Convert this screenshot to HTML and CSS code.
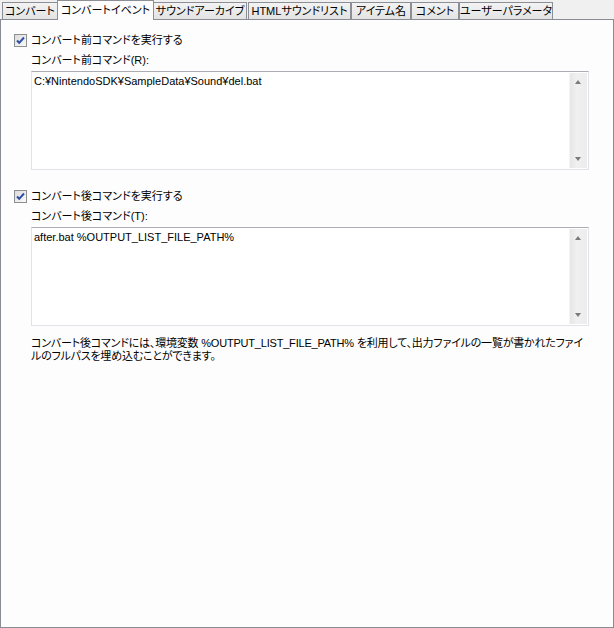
FILE: index.html
```html
<!DOCTYPE html>
<html lang="ja">
<head>
<meta charset="utf-8">
<link rel="stylesheet" href="styles.css">
</head>
<body>
<div class="tabs">
  <div class="tab t1">コンバート</div>
  <div class="tab t2 active">コンバートイベント</div>
  <div class="tab t3">サウンドアーカイブ</div>
  <div class="tab t4">HTMLサウンドリスト</div>
  <div class="tab t5">アイテム名</div>
  <div class="tab t6">コメント</div>
  <div class="tab t7">ユーザーパラメータ</div>
</div>
<div class="panel">
  <div class="check-row first">
    <span class="cb"><svg width="13" height="13" viewBox="0 0 13 13"><path d="M3 6.5 L5.2 8.8 L10 3.5" fill="none" stroke="#2c4fa8" stroke-width="2"/></svg></span>
    <span class="cb-label">コンバート前コマンドを実行する</span>
  </div>
  <div class="field-label">コンバート前コマンド(R):</div>
  <div class="textbox">
    <div class="text">C:¥NintendoSDK¥SampleData¥Sound¥del.bat</div>
    <div class="vscroll"><span class="up"></span><span class="down"></span></div>
  </div>
  <div class="check-row second">
    <span class="cb"><svg width="13" height="13" viewBox="0 0 13 13"><path d="M3 6.5 L5.2 8.8 L10 3.5" fill="none" stroke="#2c4fa8" stroke-width="2"/></svg></span>
    <span class="cb-label">コンバート後コマンドを実行する</span>
  </div>
  <div class="field-label">コンバート後コマンド(T):</div>
  <div class="textbox">
    <div class="text">after.bat %OUTPUT_LIST_FILE_PATH%</div>
    <div class="vscroll"><span class="up"></span><span class="down"></span></div>
  </div>
  <p class="note">コンバート後コマンドには、環境変数 %OUTPUT_LIST_FILE_PATH% を利用して、出力ファイルの一覧が書かれたファイ<br>ルのフルパスを埋め込むことができます。</p>
</div>
</body>
</html>
```
FILE: styles.css
```css
html, body {
  margin: 0;
  padding: 0;
}
body {
  width: 614px;
  height: 628px;
  background: #f0f0f0;
  font-family: "Liberation Sans", "Noto Sans CJK JP", sans-serif;
  font-size: 11px;
  font-feature-settings: "palt";
  color: #000;
  overflow: hidden;
}
.tabs {
  display: flex;
  align-items: flex-end;
  height: 19px;
  padding-left: 2px;
  position: relative;
  z-index: 2;
}
.tab {
  box-sizing: border-box;
  height: 17px;
  border: 1px solid #8c8f96;
  border-bottom: none;
  background: linear-gradient(#f3f3f3, #e3e3e3);
  display: flex;
  align-items: center;
  justify-content: center;
  line-height: 12px;
  white-space: nowrap;
}
.tab.active {
  height: 20px;
  background: #fdfdfd;
  margin-bottom: -1px;
  padding-bottom: 2px;
  margin-left: -1px;
  margin-right: -1px;
}
.t1 { width: 56px; }
.t2 { width: 97px; }
.t3 { width: 94px; }
.t4 { width: 103px; margin-left: 1px; }
.t5 { width: 60px; }
.t6 { width: 48px; }
.t7 { width: 94px; }
.panel {
  box-sizing: border-box;
  height: 609px;
  border: 1px solid #898c95;
  background: #fdfdfd;
  padding: 14px 0 0 13px;
  position: relative;
  z-index: 1;
}
.check-row {
  display: flex;
  align-items: center;
  height: 13px;
}
.check-row.second { margin-top: 20px; }
.cb {
  box-sizing: border-box;
  width: 13px;
  height: 13px;
  border: 1px solid #8e8f8f;
  background: linear-gradient(135deg, #dcdcdc, #fafafa);
  display: flex;
  align-items: center;
  justify-content: center;
  margin-right: 4px;
}
.cb svg { display: block; margin: -1px; }
.cb-label { line-height: 13px; }
.field-label {
  margin-left: 17px;
  margin-top: 6px;
  height: 18px;
  line-height: 14px;
}
.textbox {
  box-sizing: border-box;
  margin-left: 17px;
  width: 558px;
  height: 99px;
  border: 1px solid #e2e3ea;
  border-top-color: #abadb3;
  background: #fff;
  display: flex;
  justify-content: space-between;
}
.text {
  padding: 2px 0 0 2px;
  line-height: 14px;
}
.vscroll {
  width: 17px;
  margin: 1px;
  background: linear-gradient(90deg, #e6e6e6, #f0f0f0 40%, #ececec);
  border-left: 1px solid #f5f5f5;
  position: relative;
}
.up, .down {
  position: absolute;
  left: 5px;
  width: 0;
  height: 0;
  border-left: 3.5px solid transparent;
  border-right: 3.5px solid transparent;
}
.up { top: 7px; border-bottom: 4px solid #7a7a7a; }
.down { bottom: 7px; border-top: 4px solid #7a7a7a; }
.note {
  margin: 11px 0 0 17px;
  white-space: nowrap;
  letter-spacing: -0.2px;
  line-height: 13px;
}
```
